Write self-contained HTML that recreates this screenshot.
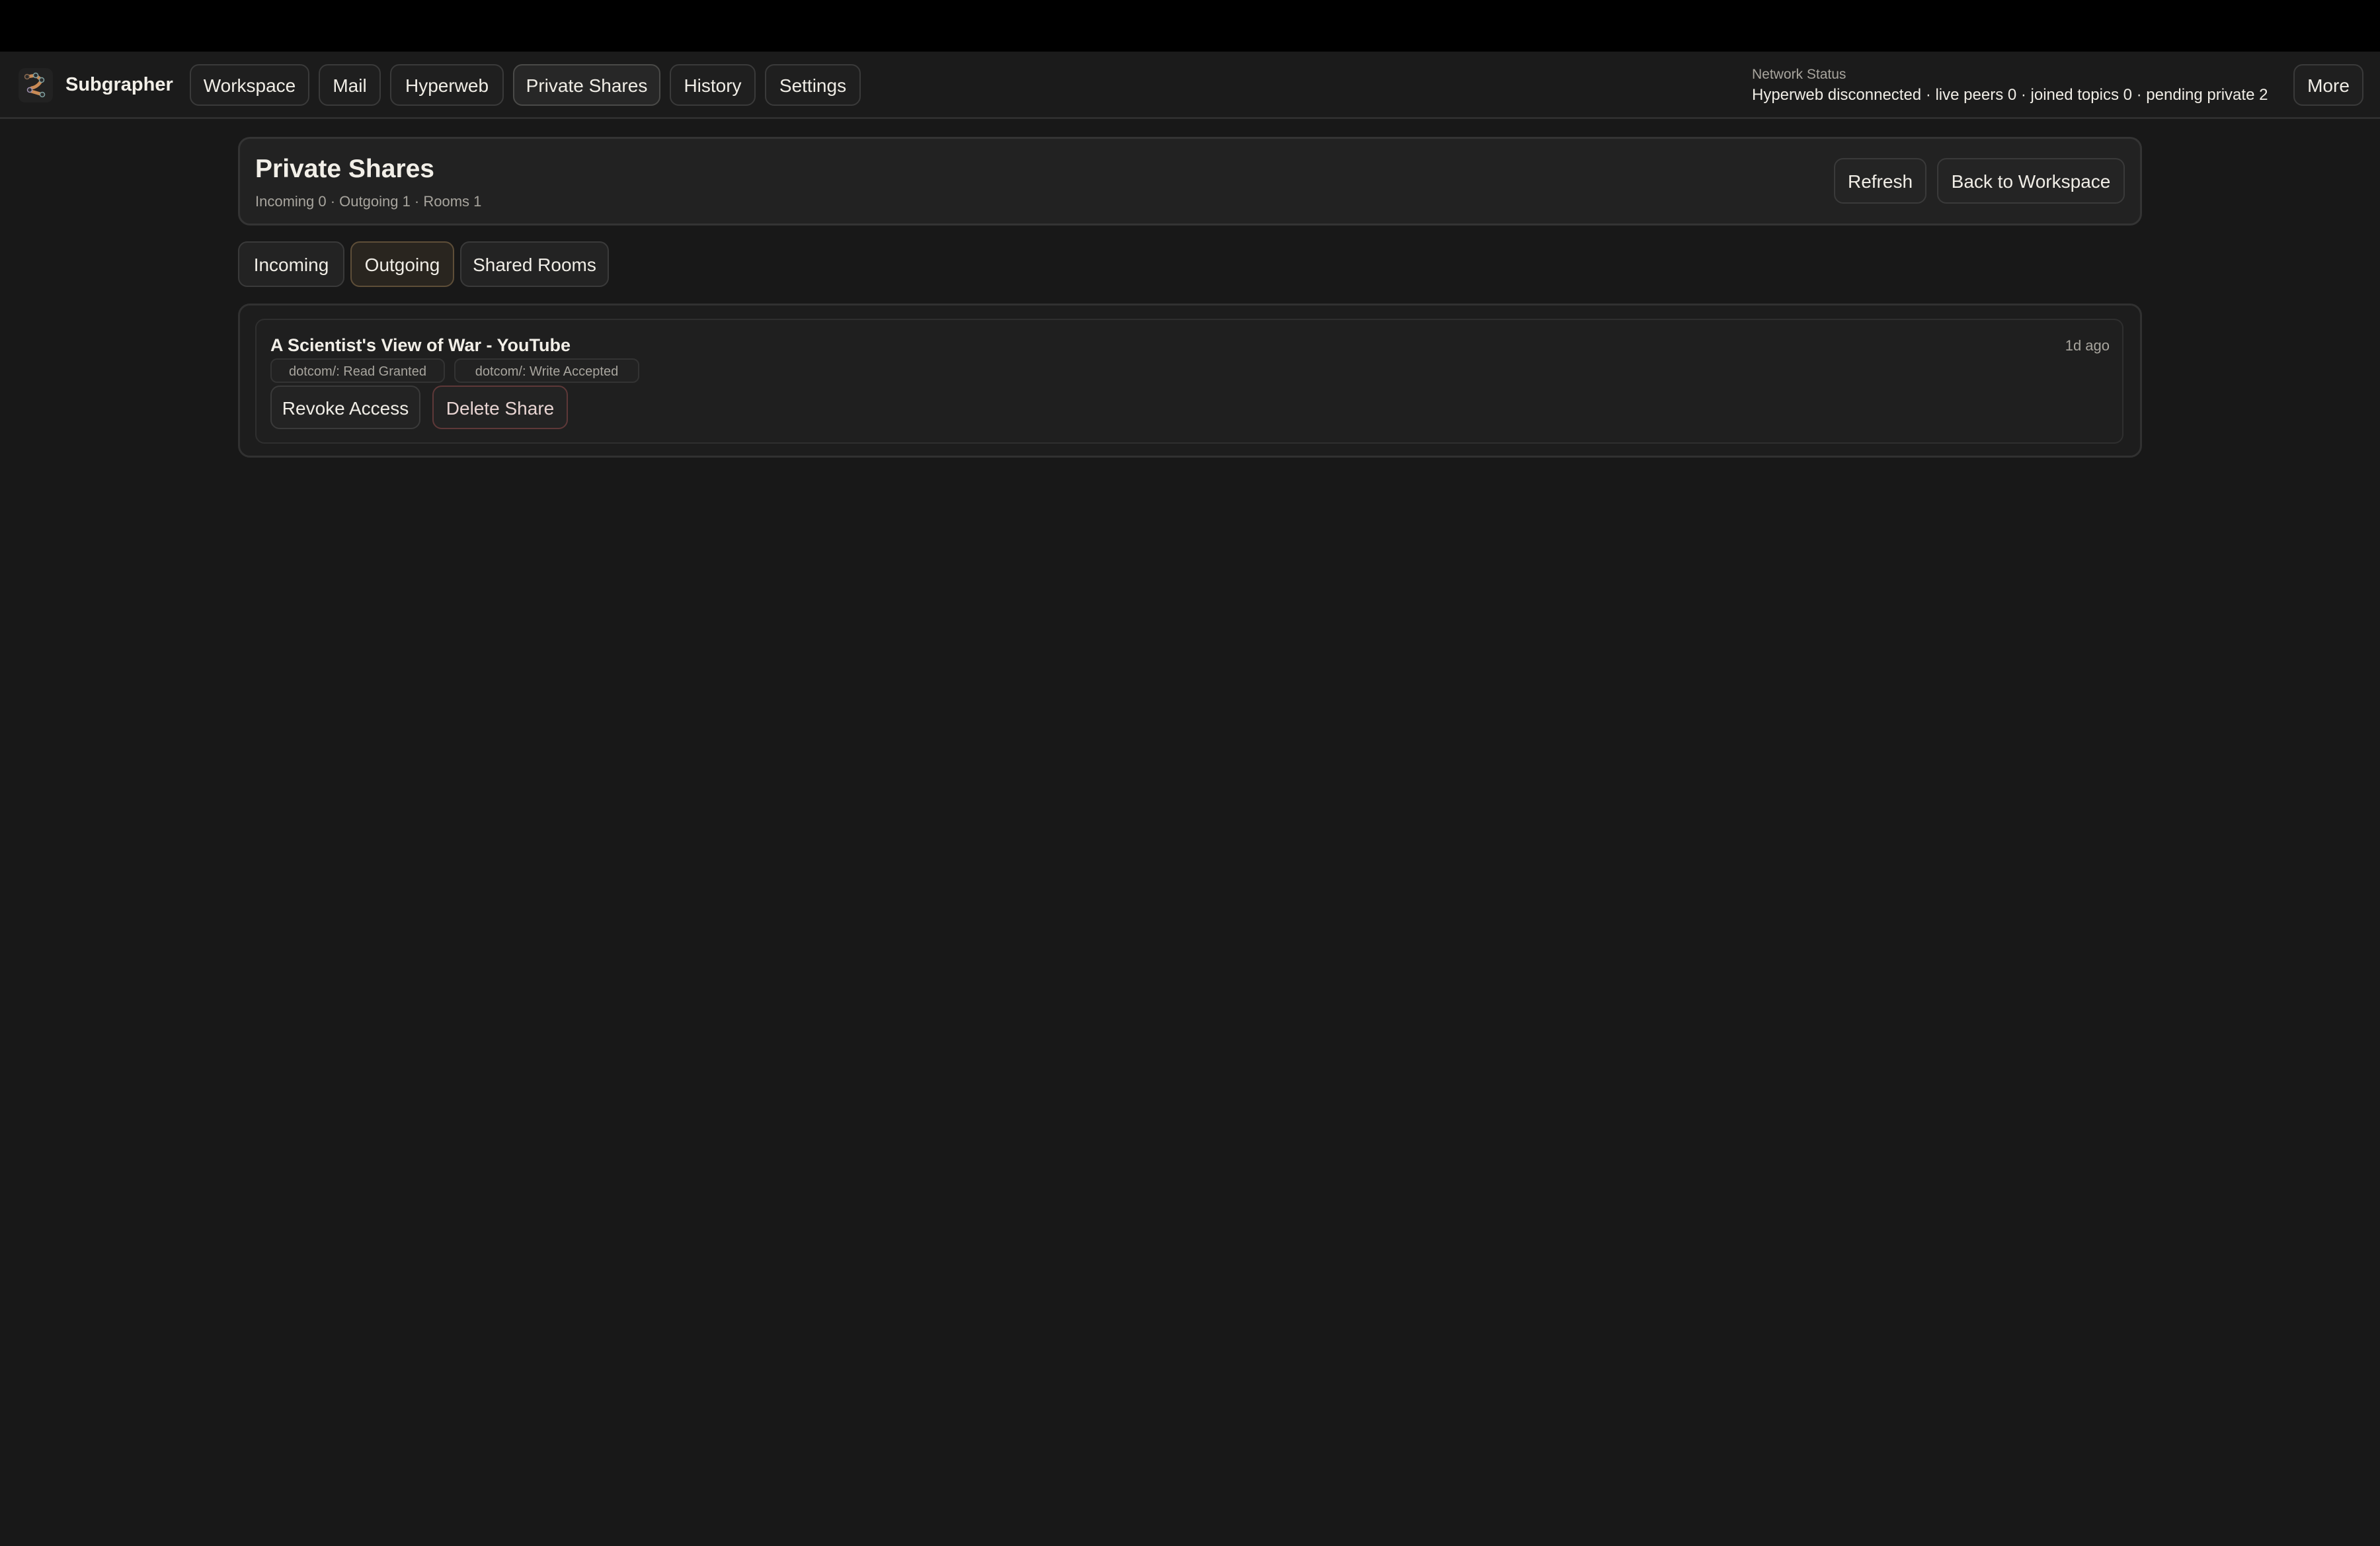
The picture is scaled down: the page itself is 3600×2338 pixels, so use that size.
<!DOCTYPE html>
<html><head><meta charset="utf-8"><style>
*{box-sizing:border-box;margin:0;padding:0}
body{width:3600px;height:2338px;background:#181818;font-family:"Liberation Sans",sans-serif;color:#eeeae2;position:relative;overflow:hidden}
.abs{position:absolute}
.btn{position:absolute;display:flex;align-items:center;justify-content:center;border:2px solid #3a3a3a;border-radius:14px;background:#1f1f1f;color:#f0ede6;font-size:28px;white-space:nowrap;padding-top:3px}
</style></head><body>
<div class="abs" style="left:0;top:0;width:3600px;height:78px;background:#000"></div>
<div class="abs" style="left:0;top:78px;width:3600px;height:102px;background:#1b1b1b;border-bottom:3px solid #2e2e2e"></div>
<svg class="abs" style="left:28px;top:103px" width="52" height="52" viewBox="0 0 52 52">
<rect x="0" y="0" width="52" height="52" rx="10" fill="#222"/>
<path d="M13 13 L26 11 L35 18 Q30 28 20 30 Q15 33 16 34 L36 40" stroke="#c98a55" stroke-width="5" fill="none" stroke-linecap="round" stroke-linejoin="round"/>
<circle cx="13" cy="13" r="3.5" fill="#2a2a2a" stroke="#8a6a50" stroke-width="1.5"/>
<circle cx="26" cy="11" r="3.5" fill="#2a2a2a" stroke="#7fa0a0" stroke-width="1.5"/>
<circle cx="35" cy="18" r="3.5" fill="#2a2a2a" stroke="#7fa0a0" stroke-width="1.5"/>
<circle cx="17" cy="33" r="3.5" fill="#2a2a2a" stroke="#a090b0" stroke-width="1.5"/>
<circle cx="36" cy="40" r="3.5" fill="#2a2a2a" stroke="#7fa0a0" stroke-width="1.5"/>
</svg>
<div class="abs" style="left:99px;top:112px;font-size:29px;font-weight:bold;color:#f2efe8">Subgrapher</div>
<div class="btn" style="left:287px;top:97px;width:181px;height:63px">Workspace</div>
<div class="btn" style="left:482px;top:97px;width:94px;height:63px">Mail</div>
<div class="btn" style="left:590px;top:97px;width:172px;height:63px">Hyperweb</div>
<div class="btn" style="left:776px;top:97px;width:223px;height:63px;background:#272727;border-color:#4a4a48">Private Shares</div>
<div class="btn" style="left:1013px;top:97px;width:130px;height:63px">History</div>
<div class="btn" style="left:1157px;top:97px;width:145px;height:63px">Settings</div>
<div class="abs" style="left:2650px;top:101px;font-size:21px;color:#a8a59e">Network Status</div>
<div class="abs" style="left:2650px;top:130px;font-size:24px;color:#f0ede6;white-space:nowrap">Hyperweb disconnected · live peers 0 · joined topics 0 · pending private 2</div>
<div class="btn" style="left:3469px;top:97px;width:106px;height:63px">More</div>

<div class="abs" style="left:360px;top:207px;width:2880px;height:134px;background:#222;border:3px solid #343434;border-radius:18px"></div>
<div class="abs" style="left:386px;top:234px;font-size:39px;font-weight:bold;color:#f2efe8">Private Shares</div>
<div class="abs" style="left:386px;top:292px;font-size:22px;color:#a8a59e">Incoming 0 · Outgoing 1 · Rooms 1</div>
<div class="btn" style="left:2774px;top:239px;width:140px;height:69px;background:#242424">Refresh</div>
<div class="btn" style="left:2930px;top:239px;width:284px;height:69px;background:#242424">Back to Workspace</div>

<div class="btn" style="left:360px;top:365px;width:161px;height:69px;background:#232323">Incoming</div>
<div class="btn" style="left:530px;top:365px;width:157px;height:69px;background:#29251f;border-color:#5e4e38">Outgoing</div>
<div class="btn" style="left:696px;top:365px;width:225px;height:69px;background:#232323">Shared Rooms</div>

<div class="abs" style="left:360px;top:459px;width:2880px;height:233px;background:#1d1d1d;border:3px solid #313131;border-radius:18px"></div>
<div class="abs" style="left:386px;top:482px;width:2826px;height:189px;background:#1f1f1f;border:2px solid #2f2f2f;border-radius:14px"></div>
<div class="abs" style="left:409px;top:507px;font-size:27px;font-weight:bold;color:#f2efe8">A Scientist's View of War - YouTube</div>
<div class="abs" style="left:3100px;top:510px;width:91px;text-align:right;font-size:22px;color:#a8a59e;white-space:nowrap">1d ago</div>
<div class="btn" style="left:409px;top:542px;width:264px;height:37px;font-size:20px;color:#a8a59e;background:#222;border-color:#333;border-radius:10px">dotcom/: Read Granted</div>
<div class="btn" style="left:687px;top:542px;width:280px;height:37px;font-size:20px;color:#a8a59e;background:#222;border-color:#333;border-radius:10px">dotcom/: Write Accepted</div>
<div class="btn" style="left:409px;top:583px;width:227px;height:66px;background:#232323">Revoke Access</div>
<div class="btn" style="left:654px;top:583px;width:205px;height:66px;background:#232323;border-color:#5e3838;color:#e8d4d2">Delete Share</div>
</body></html>
